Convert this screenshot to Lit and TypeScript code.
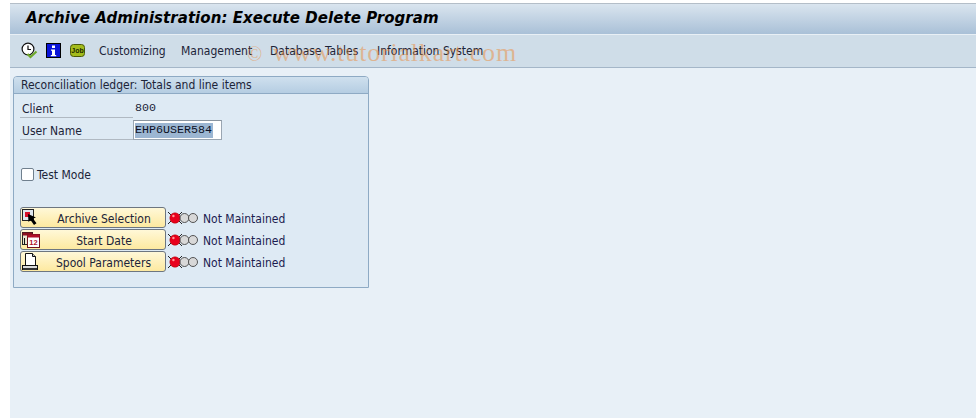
import { LitElement, html, css } from "lit";
import { customElement } from "lit/decorators.js";

const lights = html`<svg class="lights" width="30" height="14" viewBox="0 0 30 14">
  <g stroke="#222" stroke-width="1"><path d="M0 1l3 3M14 1l-3 3M0 13l3-3M14 13l-3-3" /></g>
  <circle cx="7" cy="7" r="5.2" fill="#e8001c" stroke="#a00" stroke-width=".5"/>
  <circle cx="5.4" cy="5" r="1.2" fill="#ff9a9a"/>
  <circle cx="16.500" cy="7" r="4.5" fill="#d8d8d8" stroke="#444" stroke-width=".9"/>
  <circle cx="25" cy="7" r="4.5" fill="#d8d8d8" stroke="#444" stroke-width=".9"/>
</svg>`;

const clockIcon = html`<svg width="17" height="17" viewBox="0 0 17 17">
  <circle cx="7" cy="7" r="5.900" fill="#fff" stroke="#111" stroke-width="1.2"/>
  <path d="M7 3.5V7.5H10" fill="none" stroke="#111" stroke-width="1.2"/>
  <path d="M6.5 12l3 3 6-5.5" fill="none" stroke="#6fa82a" stroke-width="2.2"/>
</svg>`;

const infoIcon = html`<svg width="15" height="15" viewBox="0 0 15 15">
  <rect x=".5" y=".5" width="14" height="14" fill="#0a14d8" stroke="#000"/>
  <rect x="6" y="2.5" width="3" height="2.5" fill="#fff"/>
  <path d="M5 6.5h4v5.5h1.2v1.2H4.8V12H6V7.7H5z" fill="#fff"/>
</svg>`;

const jobIcon = html`<svg width="15" height="13" viewBox="0 0 15 13">
  <rect x=".5" y=".5" width="14" height="12" rx="3" fill="#a4bc1c" stroke="#4a5a08"/>
  <text x="7.5" y="9" text-anchor="middle" font-family="Liberation Sans, sans-serif" font-size="7" font-weight="700" fill="#1c2a00">Job</text>
</svg>`;

const selectIcon = html`<svg width="18" height="18" viewBox="0 0 18 18">
  <rect x=".5" y=".5" width="11" height="11" fill="#dfe6ee" stroke="#222"/>
  <rect x="3" y="3" width="5" height="5" fill="#d8102a"/>
  <path d="M6 5l.5 8 2-2 3.500 5 2.500-1.800-3.500-4.700 3-1z" fill="#000"/>
</svg>`;

const dateIcon = html`<svg width="18" height="16" viewBox="0 0 18 16">
  <rect x=".5" y=".5" width="10" height="12" fill="#e9e4d0" stroke="#222"/>
  <rect x=".5" y=".5" width="10" height="3" fill="#8a1020"/>
  <path d="M2 6h1v6H2z" fill="#111"/>
  <rect x="5.500" y="2.500" width="12" height="13" fill="#fff" stroke="#70101c"/>
  <rect x="5.500" y="2.500" width="12" height="3" fill="#b01028"/>
  <text x="11.500" y="13" text-anchor="middle" font-family="Liberation Sans, sans-serif" font-size="7.500" font-weight="700" fill="#b01028">12</text>
</svg>`;

const spoolIcon = html`<svg width="17" height="18" viewBox="0 0 17 18">
  <path d="M3.500 .5h7l3 3v9h-10z" fill="#fff" stroke="#111"/>
  <path d="M10.500 .5v3h3" fill="#c8c8c8" stroke="#111"/>
  <rect x=".5" y="12.500" width="15" height="4" fill="#dcdcdc" stroke="#111"/>
  <rect x="1" y="15" width="14" height="2" fill="#333"/>
</svg>`;

@customElement("app-root")
export class AppRoot extends LitElement {
  static styles = css`
    :host {
      display: block;
      width: 976px;
      height: 418px;
      background: #fff;
      font-family: "DejaVu Sans Condensed", "DejaVu Sans", sans-serif;
      font-stretch: condensed;
      font-size: 12px;
      color: #1c2438;
      overflow: hidden;
    }
    .window {
      position: relative;
      margin-left: 10px;
      padding-top: 3px;
      height: 415px;
      display: flex;
      flex-direction: column;
    }
    .title {
      height: 31px;
      flex: none;
      box-sizing: border-box;
      border-top: 1px solid #b4bec8;
      background: linear-gradient(#dae5ef, #a9c0d7);
      display: flex;
      align-items: center;
      padding: 0 0 3px 16px;
      font-family: "DejaVu Sans", sans-serif;
      font-stretch: normal;
      font-weight: 700;
      font-style: italic;
      font-size: 15px;
      letter-spacing: 0.05px;
      color: #000;
      white-space: nowrap;
    }
    .toolbar {
      height: 34px;
      flex: none;
      box-sizing: border-box;
      border-top: 1px solid #e8eff5;
      border-bottom: 1px solid #a4b6c8;
      background: #cfdde8;
      display: flex;
      align-items: center;
      padding: 0 0 1px 11px;
    }
    .icons {
      display: flex;
      align-items: center;
      width: 78px;
      flex: none;
    }
    .icons svg { display: block; }
    .icons .i2 { margin-left: 8px; }
    .icons .i3 { margin-left: 9px; }
    .menu { display: flex; white-space: nowrap; }
    .menu span:nth-child(1) { width: 82px; }
    .menu span:nth-child(2) { width: 89px; }
    .menu span:nth-child(3) { width: 107px; }
    .content {
      flex: 1;
      background: #e8f0f7;
      padding: 8px 0 0 3px;
    }
    .panel {
      width: 356px;
      height: 212px;
      box-sizing: border-box;
      border: 1px solid #8eaac4;
      border-radius: 4px 4px 0 0;
      background: #deeaf4;
    }
    .panel-head {
      height: 17px;
      box-sizing: border-box;
      background: linear-gradient(#cfe0ee, #b5cde2);
      border-bottom: 1px solid #8eaac4;
      border-radius: 3px 3px 0 0;
      padding-left: 7px;
      line-height: 16px;
      white-space: nowrap;
    }
    .field {
      display: flex;
      align-items: center;
      height: 22px;
      margin-left: 6px;
    }
    .field.first { margin-top: 2px; }
    .label {
      width: 113px;
      height: 100%;
      flex: none;
      box-sizing: border-box;
      border-bottom: 1px solid #b0b9c2;
      padding: 4px 0 0 2px;
      line-height: 18px;
    }
    .value {
      font-family: "Liberation Mono", monospace;
      font-size: 11.67px;
      padding: 2px 0 0 2px;
    }
    .input {
      width: 89px;
      height: 20px;
      box-sizing: border-box;
      border: 1px solid #9aa6b2;
      border-top-color: #8a95a0;
      background: #fff;
      padding: 2px 0 0 1px;
      margin-top: 2px;
    }
    .input span {
      display: block;
      width: 78px;
      height: 15px;
      background: #9cb6d2;
      font-family: "Liberation Mono", monospace;
      font-size: 11.67px;
      line-height: 15px;
      color: #0c1226;
      white-space: nowrap;
      overflow: hidden;
    }
    .check {
      display: flex;
      align-items: center;
      gap: 3px;
      margin: 26px 0 0 7px;
      height: 16px;
    }
    .check span { padding-top: 2px; }
    .box {
      width: 13px;
      height: 13px;
      box-sizing: border-box;
      border: 1px solid #70808e;
      border-radius: 2px;
      background: #fff;
    }
    .actions {
      margin: 25px 0 0 6px;
      display: flex;
      flex-direction: column;
      gap: 1px;
    }
    .row { display: flex; align-items: center; height: 21px; }
    .btn {
      width: 146px;
      height: 21px;
      box-sizing: border-box;
      border: 1px solid #6d7680;
      border-radius: 3px;
      background: linear-gradient(#fff8d8, #fde9a0);
      display: flex;
      align-items: center;
      padding-left: 1px;
      flex: none;
    }
    .btn svg { display: block; flex: none; }
    .btn .txt { flex: 1; text-align: center; padding: 2px 0 0 3px; white-space: nowrap; }
    .lights { margin: 1px 0 0 2px; flex: none; display: block; }
    .status { margin-left: 5px; padding-top: 2px; white-space: nowrap; color: #1c1c50; }
    .mark {
      position: absolute;
      left: 237px;
      top: 38px;
      display: flex;
      align-items: baseline;
      font-family: "Liberation Serif", serif;
      font-stretch: normal;
      font-size: 26px;
      letter-spacing: 0.8px;
      color: rgba(235, 140, 60, 0.5);
      white-space: nowrap;
      pointer-events: none;
    }
    .mark .c { font-size: 20px; width: 26px; }
  `;

  private row(icon: unknown, label: string) {
    return html`<div class="row">
      <div class="btn">${icon}<span class="txt">${label}</span></div>
      ${lights}<span class="status">Not Maintained</span>
    </div>`;
  }

  render() {
    return html`<div class="window">
      <div class="title">Archive Administration: Execute Delete Program</div>
      <div class="toolbar">
        <div class="icons">
          ${clockIcon}
          <span class="i2">${infoIcon}</span>
          <span class="i3">${jobIcon}</span>
        </div>
        <div class="menu">
          <span>Customizing</span><span>Management</span><span>Database Tables</span><span>Information System</span>
        </div>
      </div>
      <div class="content">
        <div class="panel">
          <div class="panel-head">Reconciliation ledger: Totals and line items</div>
          <div class="field first"><div class="label">Client</div><span class="value">800</span></div>
          <div class="field"><div class="label">User Name</div><div class="input"><span>EHP6USER584</span></div></div>
          <div class="check"><div class="box"></div><span>Test Mode</span></div>
          <div class="actions">
            ${this.row(selectIcon, "Archive Selection")}
            ${this.row(dateIcon, "Start Date")}
            ${this.row(spoolIcon, "Spool Parameters")}
          </div>
        </div>
      </div>
      <div class="mark"><span class="c">©</span><span>www.tutorialkart.com</span></div>
    </div>`;
  }
}
